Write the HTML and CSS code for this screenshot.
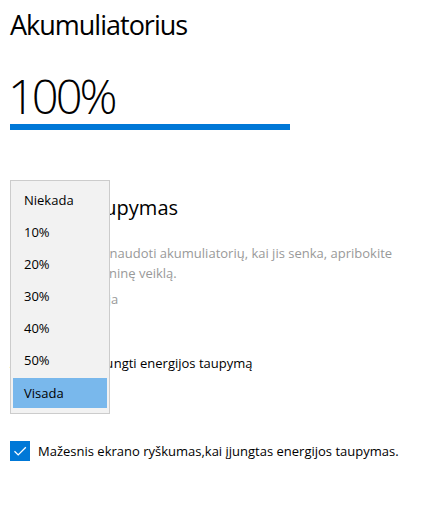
FILE: index.html
```html
<!DOCTYPE html>
<html lang="lt">
<head>
<meta charset="utf-8">
<link rel="stylesheet" href="styles.css">
</head>
<body>
<main class="page">
  <h1 class="title">Akumuliatorius</h1>
  <div class="percent">100%</div>
  <div class="bar"><div class="bar-fill" style="width:100%"></div></div>

  <section class="saver">
    <h2 class="saver-title"><span class="tight">Energijos ta</span>upymas</h2>
    <p class="desc">Norėdami ilgiau naudoti akumuliatorių, kai jis senka, apribokite<br>pranešimus ir foninę veiklą.</p>
    <div class="label">Įjungti kai baterija</div>
    <div class="combo">20%</div>
    <div class="toggle-label"><span class="loose">Automatiškai įju</span>ngti energijos taupymą</div>
    <div class="toggle"><span class="knob"></span></div>

    <label class="check-row">
      <span class="checkbox">
        <svg width="20" height="20" viewBox="0 0 20 20"><path d="M4.5 10.2 L8.2 13.9 L15.8 6.2" fill="none" stroke="#fff" stroke-width="1.3"/></svg>
      </span>
      <span class="check-text">Mažesnis ekrano ryškumas,kai įjungtas energijos taupymas.</span>
    </label>

    <ul class="popup">
      <li class="opt">Niekada</li>
      <li class="opt">10%</li>
      <li class="opt">20%</li>
      <li class="opt">30%</li>
      <li class="opt">40%</li>
      <li class="opt">50%</li>
      <li class="opt selected">Visada</li>
    </ul>
  </section>
</main>
</body>
</html>
```
FILE: styles.css
```css
* { box-sizing: border-box; }
html, body { margin: 0; padding: 0; background: #fff; }
body {
  font-family: "Open Sans", "Noto Sans", sans-serif;
  color: #000;
  width: 432px;
  height: 507px;
  overflow: hidden;
}
.page { padding: 0 0 0 10px; position: relative; }
.title {
  margin: 0;
  padding-top: 5px;
  font-size: 27px;
  font-weight: 400;
  line-height: 40px;
  letter-spacing: -1px;
}
.percent {
  margin-top: 24px;
  font-size: 47px;
  font-weight: 300;
  line-height: 54px;
  letter-spacing: -3px;
  margin-left: -2px;
}
.bar { width: 280px; height: 6px; margin-top: 1px; background: #e6e6e6; }
.bar-fill { height: 100%; background: #0078d7; }

.saver-title {
  margin: 64px 0 0;
  font-size: 20px;
  font-weight: 400;
  line-height: 28px;
}
.tight { letter-spacing: -1.2px; }
.loose { letter-spacing: 0.4px; }
.desc {
  margin: 21px 0 0;
  font-size: 13px;
  line-height: 20px;
  color: #999;
  white-space: nowrap;
}
.label { margin-top: 6px; font-size: 13px; line-height: 20px; color: #999; }
.combo { margin-top: 8px; width: 100px; height: 32px; border: 2px solid #999; padding-left: 10px; font-size: 13px; line-height: 28px; }
.toggle-label { margin-top: 4px; font-size: 13px; line-height: 20px; }
.toggle { margin-top: 8px; width: 44px; height: 20px; border: 2px solid #333; border-radius: 10px; }
.check-row {
  display: flex;
  align-items: center;
  gap: 8px;
  margin-top: 40px;
}
.checkbox {
  width: 20px; height: 20px;
  background: #0078d7;
  display: flex;
}
.check-text { font-size: 13px; line-height: 20px; }

.popup {
  position: absolute;
  left: 10px;
  top: 180px;
  width: 100px;
  margin: 0;
  padding: 3px 1px 5px;
  list-style: none;
  background: #f2f2f2;
  border: 1px solid #cccccc;
}
.opt {
  height: 32px;
  line-height: 32px;
  padding-left: 11px;
  font-size: 13px;
  margin: 0 1px;
}
.opt.selected { background: #79b8ec; height: 30px; line-height: 30px; margin-top: 2px; }
```
